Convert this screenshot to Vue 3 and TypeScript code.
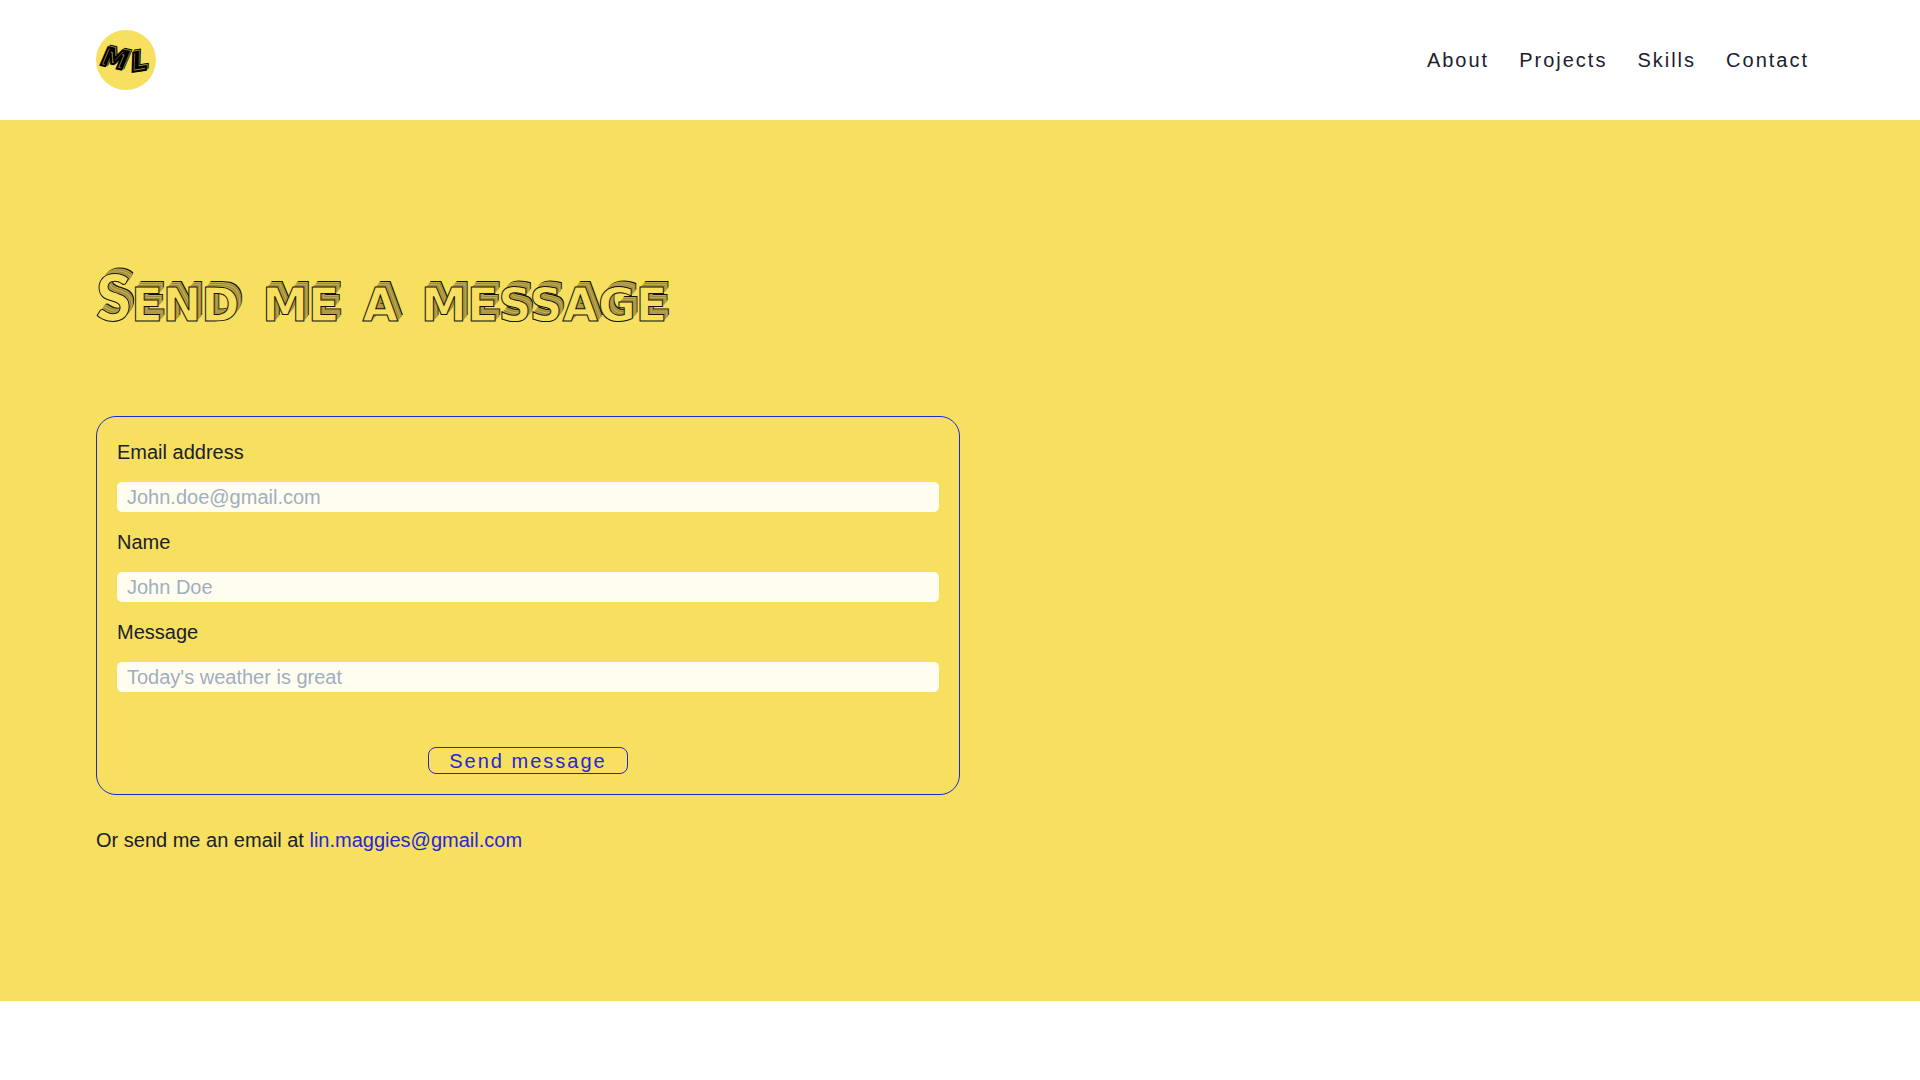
<script setup lang="ts">
import { reactive } from 'vue'

interface Field {
  id: 'email' | 'name' | 'message'
  label: string
  type: string
  placeholder: string
}

const links: string[] = ['About', 'Projects', 'Skills', 'Contact']

const fields: Field[] = [
  { id: 'email', label: 'Email address', type: 'email', placeholder: 'John.doe@gmail.com' },
  { id: 'name', label: 'Name', type: 'text', placeholder: 'John Doe' },
  { id: 'message', label: 'Message', type: 'text', placeholder: "Today's weather is great" },
]

const values = reactive<Record<Field['id'], string>>({ email: '', name: '', message: '' })
</script>

<template>
  <header class="topbar">
    <a class="logo" href="#" aria-label="Home">
      <svg width="60" height="60" viewBox="0 0 60 60">
        <circle cx="30" cy="30" r="30" fill="#f7df60" />
        <g class="mark">
          <text x="4" y="35" transform="rotate(12 4 35)">M</text>
          <text x="36" y="42" transform="rotate(-9 36 42)">L</text>
        </g>
      </svg>
    </a>
    <nav class="nav">
      <a v-for="link in links" :key="link" :href="'#' + link.toLowerCase()">{{ link }}</a>
    </nav>
  </header>

  <main id="contact" class="contact">
    <h1 class="title">Send me a message</h1>
    <form class="form" @submit.prevent>
      <div v-for="field in fields" :key="field.id" class="field">
        <label :for="field.id">{{ field.label }}</label>
        <input
          :id="field.id"
          v-model="values[field.id]"
          :type="field.type"
          :placeholder="field.placeholder"
        />
      </div>
      <button type="submit" class="send">Send message</button>
    </form>
    <p class="alt">
      Or send me an email at
      <a href="mailto:lin.maggies@gmail.com">lin.maggies@gmail.com</a>
    </p>
  </main>
</template>

<style>
body {
  margin: 0;
  background: #fff;
  color: #1a202c;
  font-family: "Liberation Sans", Arial, sans-serif;
  font-size: 20px;
  line-height: 30px;
}
</style>

<style scoped>
.topbar {
  display: flex;
  align-items: center;
  justify-content: space-between;
  padding: 30px 5%;
}

.logo,
.logo svg {
  display: block;
}

.mark text {
  font-family: "DejaVu Sans", sans-serif;
  font-size: 26px;
  font-weight: 700;
  font-style: italic;
  fill: #000;
  stroke: #000;
  stroke-width: 2px;
  text-shadow: 1px -1px 0 #8f8138, 2px -2px 0 #000;
}

.nav {
  display: flex;
}

.nav a {
  padding: 0 15px;
  color: inherit;
  letter-spacing: 2px;
  text-decoration: none;
}

.contact {
  padding: 132px 5% 146px;
  background: #f7df60;
}

.title {
  margin: 0 0 72px;
  color: #f7df60;
  font-family: "DejaVu Sans", sans-serif;
  font-size: 66px;
  font-variant: small-caps;
  font-weight: 700;
  line-height: 90px;
  -webkit-text-stroke: 1px #14120a;
  text-shadow: 1px -1px 0 #c4ae4a, 2px -2px 0 #9c8a3a, 3px -3px 0 #c4ae4a, 4px -4px 0 #9c8a3a, 4px -5px 0 #c4ae4a, 5px -6px 0 #14120a;
}

.title::first-letter {
  font-family: Lato, sans-serif;
  font-size: 64px;
  font-weight: 900;
}

.form {
  box-sizing: border-box;
  display: flex;
  flex-direction: column;
  gap: 15px;
  width: 50%;
  padding: 20px;
  border: 1px solid #1f29cc;
  border-radius: 20px;
}

.field {
  display: flex;
  flex-direction: column;
  gap: 15px;
}

.field input {
  box-sizing: border-box;
  width: 100%;
  height: 30px;
  padding: 0 10px;
  border: 0;
  border-radius: 5px;
  background: #fffdf0;
  color: inherit;
  font: inherit;
}

.field input::placeholder {
  color: #a0aec0;
  opacity: 1;
}

.send {
  align-self: center;
  margin-top: 40px;
  padding: 1px 20px 0;
  border: 1px solid #1f29cc;
  border-radius: 8px;
  background: transparent;
  color: #2626d9;
  font: inherit;
  letter-spacing: 2px;
  line-height: 24px;
}

.alt {
  margin: 30px 0 0;
}

.alt a {
  color: #2626d9;
  text-decoration: none;
}
</style>
